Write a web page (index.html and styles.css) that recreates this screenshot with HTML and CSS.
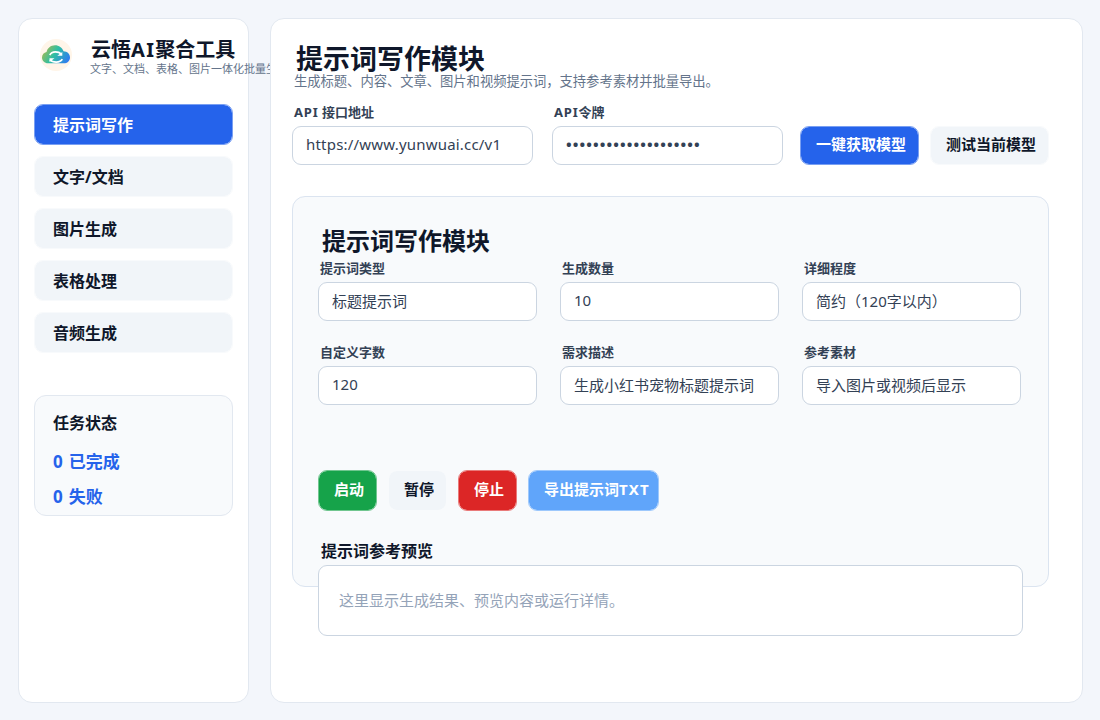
FILE: index.html
```
<!DOCTYPE html>
<html lang="zh-CN">
<head>
    <meta charset="UTF-8">
    <title>云悟AI聚合工具</title>
    <link rel="stylesheet" href="styles.css">
</head>
<body>
    <aside class="sidebar">
        <div class="brand">
            <svg class="logo" viewBox="0 0 32 32">
                <defs>
                    <linearGradient id="cloud" x1="0" y1="0.3" x2="1" y2="0.7">
                        <stop offset="0" stop-color="#a9b84c"/>
                        <stop offset="0.45" stop-color="#2fbfa3"/>
                        <stop offset="1" stop-color="#2f7cf0"/>
                    </linearGradient>
                </defs>
                <circle cx="16" cy="16" r="16" fill="#fff5e9"/>
                <path d="M8 24.3C4.500 24.300 2 21.600 2 18.500C2 15.700 4 13.600 6.500 13.100C7.300 9.200 10.800 6.300 15 6.300C19 6.300 22.200 8.700 23.500 12.200C27.200 12.300 30 15 30 18.400C30 21.700 27.300 24.300 23.800 24.300Z" fill="url(#cloud)"/>
                <path d="M9.800 16.200C10.800 13.800 12.800 12.900 15.500 12.900C18 12.900 19.800 13.500 21 14.900M22.300 20.200C21.200 22.200 19.200 23.100 16.200 23.100C13.300 23.100 11.300 22.400 10 20.900" fill="none" stroke="#fff" stroke-width="1.700"/>
                <path d="M22.300 13V16.800H17.300ZM9.500 23V19.200H14.500Z" fill="#fff"/>
            </svg>
            <div class="brand-text">
                <div class="brand-name">云悟<span class="en">AI</span>聚合工具</div>
                <div class="brand-desc">文字、文档、表格、图片一体化批量生成</div>
            </div>
        </div>

        <nav class="menu">
            <button class="menu-item active">提示词写作</button>
            <button class="menu-item">文字/文档</button>
            <button class="menu-item">图片生成</button>
            <button class="menu-item">表格处理</button>
            <button class="menu-item">音频生成</button>
        </nav>

        <div class="status">
            <div class="status-title">任务状态</div>
            <div class="status-line">0 已完成</div>
            <div class="status-line">0 失败</div>
        </div>
    </aside>

    <main class="main">
        <h1>提示词写作模块</h1>
        <p class="desc">生成标题、内容、文章、图片和视频提示词，支持参考素材并批量导出。</p>

        <div class="api-row">
            <div class="field api-url">
                <label for="apiUrl"><span class="en">API</span> 接口地址</label>
                <input type="text" id="apiUrl" value="https://www.yunwuai.cc/v1">
            </div>
            <div class="field api-key">
                <label for="apiKey"><span class="en">API</span>令牌</label>
                <input type="text" id="apiKey" class="token" value="••••••••••••••••••••">
            </div>
            <div class="api-buttons">
                <button class="btn primary">一键获取模型</button>
                <button class="btn">测试当前模型</button>
            </div>
        </div>

        <section class="panel">
            <h2>提示词写作模块</h2>
            <div class="form-grid">
                <div class="field">
                    <label for="type">提示词类型</label>
                    <input type="text" id="type" value="标题提示词">
                </div>
                <div class="field">
                    <label for="count">生成数量</label>
                    <input type="text" id="count" value="10">
                </div>
                <div class="field">
                    <label for="detail">详细程度</label>
                    <input type="text" id="detail" value="简约（120字以内）">
                </div>
                <div class="field">
                    <label for="words">自定义字数</label>
                    <input type="text" id="words" value="120">
                </div>
                <div class="field">
                    <label for="need">需求描述</label>
                    <input type="text" id="need" value="生成小红书宠物标题提示词">
                </div>
                <div class="field">
                    <label for="material">参考素材</label>
                    <input type="text" id="material" value="导入图片或视频后显示">
                </div>
            </div>

            <div class="actions">
                <button class="btn start">启动</button>
                <button class="btn">暂停</button>
                <button class="btn stop">停止</button>
                <button class="btn export">导出提示词<span class="en">TXT</span></button>
            </div>

            <h3>提示词参考预览</h3>
            <div class="preview">这里显示生成结果、预览内容或运行详情。</div>
        </section>
    </main>
</body>
</html>
```
FILE: styles.css
```
* {
    box-sizing: border-box;
}

body {
    margin: 0;
    padding: 18px 17px 17px 18px;
    height: 720px;
    display: flex;
    gap: 21px;
    overflow: hidden;
    background-color: #f3f6fb;
    color: #0f172a;
    font-family: "Noto Sans", "Noto Sans CJK SC", sans-serif;
}

button,
input {
    font-family: inherit;
}

h1, h2, h3, p {
    margin: 0;
}

.sidebar,
.main {
    background-color: #fff;
    border: 1px solid #e2e8f0;
    border-radius: 14px;
}

.sidebar {
    width: 231px;
    flex: none;
    padding: 19px 15px;
}

.brand {
    display: flex;
    gap: 18px;
    height: 66px;
    padding-left: 6px;
}

.logo {
    width: 32px;
    height: 32px;
    margin-top: 1px;
    flex: none;
}

.brand-text {
    width: 0;
    white-space: nowrap;
}

.brand-name {
    padding-left: 1px;
    font-size: 20px;
    line-height: 24px;
    font-weight: bold;
}

.brand-name .en {
    letter-spacing: 1.3px;
}

.brand-desc {
    font-size: 11px;
    line-height: 13px;
    color: #64748b;
}

.menu {
    display: flex;
    flex-direction: column;
    gap: 11px;
}

.menu-item {
    height: 41px;
    padding: 0 18px;
    border: 1px solid #f8fafc;
    border-radius: 9px;
    background-color: #f1f5f9;
    background-clip: padding-box;
    color: #0f172a;
    font-size: 16px;
    line-height: 24px;
    font-weight: bold;
    text-align: left;
    cursor: pointer;
}

.menu-item.active {
    background-color: #2563eb;
    border-color: #799ff2;
    color: #fff;
}

.status {
    height: 121px;
    margin-top: 42px;
    padding: 14px 18px;
    border: 1px solid #e2e8f0;
    border-radius: 12px;
    background-color: #f8fafc;
}

.status-title {
    font-size: 16px;
    line-height: 26px;
    font-weight: bold;
    margin-bottom: 8px;
}

.status-line {
    font-size: 17px;
    line-height: 35px;
    font-weight: bold;
    word-spacing: 1.5px;
    color: #2563eb;
}

.main {
    flex: 1;
    padding: 21px 33px 0 21px;
}

h1 {
    padding-left: 4px;
    font-size: 27px;
    line-height: 37px;
}

.desc {
    padding-left: 2px;
    margin-top: -1px;
    font-size: 13.33px;
    line-height: 10px;
    letter-spacing: -0.05px;
    color: #64748b;
}

.api-row {
    display: flex;
    align-items: flex-end;
    margin-top: 17px;
}

.api-url {
    width: 241px;
    margin-right: 19px;
}

.api-url input {
    letter-spacing: 0.2px;
}

.api-key {
    width: 231px;
    margin-right: 17px;
}

.field label {
    display: block;
    height: 23px;
    padding-left: 2px;
    font-size: 13px;
    line-height: 18px;
    font-weight: bold;
    color: #334155;
}

.field label .en {
    letter-spacing: 0.8px;
}

.field input {
    display: block;
    width: 100%;
    height: 39px;
    padding: 0 13px 3px;
    border: 1px solid #cbd5e1;
    border-radius: 9px;
    background-color: #fff;
    color: #334155;
    font-size: 15px;
}

.field .token {
    font-size: 15px;
    font-weight: bold;
    letter-spacing: 1.1px;
}

.api-buttons,
.actions {
    display: flex;
    gap: 11px;
}

.btn {
    height: 41px;
    padding: 0 13px 4px 15px;
    border: 1px solid #f8fafc;
    border-radius: 9px;
    background-color: #f1f5f9;
    background-clip: padding-box;
    color: #0f172a;
    font-size: 15px;
    line-height: 22px;
    font-weight: bold;
    white-space: nowrap;
    cursor: pointer;
}

.api-buttons .btn {
    width: 119px;
    height: 39px;
    padding-bottom: 3px;
}

.actions .btn {
    width: 59px;
}

.btn.primary {
    background-color: #2563eb;
    border-color: #799ff2;
    color: #fff;
}

.btn.start {
    background-color: #16a34a;
    border-color: #70c68f;
    color: #fff;
}

.btn.stop {
    background-color: #dc2626;
    border-color: #e97a7a;
    color: #fff;
}

.actions .btn.export {
    width: 131px;
    padding-right: 7px;
    background-color: #60a5fa;
    border-color: #9dc8fc;
    color: #fff;
    text-align: left;
}

.btn .en {
    letter-spacing: 1.1px;
}

.panel {
    height: 391px;
    margin-top: 31px;
    padding: 25px 25px 0;
    border: 1px solid #dbe4f0;
    border-radius: 13px;
    background-color: #f8fafc;
}

h2 {
    padding-left: 4px;
    font-size: 24px;
    line-height: 37px;
}

.form-grid {
    display: grid;
    grid-template-columns: repeat(3, 219px);
    gap: 22px 23px;
}

.actions {
    margin-top: 65px;
}

h3 {
    padding-left: 3px;
    margin-top: 27px;
    font-size: 16px;
    line-height: 27px;
}

/* runs past the bottom edge of the panel */
.preview {
    width: 705px;
    height: 71px;
    padding: 0 20px;
    border: 1px solid #cbd5e1;
    border-radius: 9px;
    background-color: #fff;
    color: #94a3b8;
    font-size: 15px;
    line-height: 69px;
}
```
